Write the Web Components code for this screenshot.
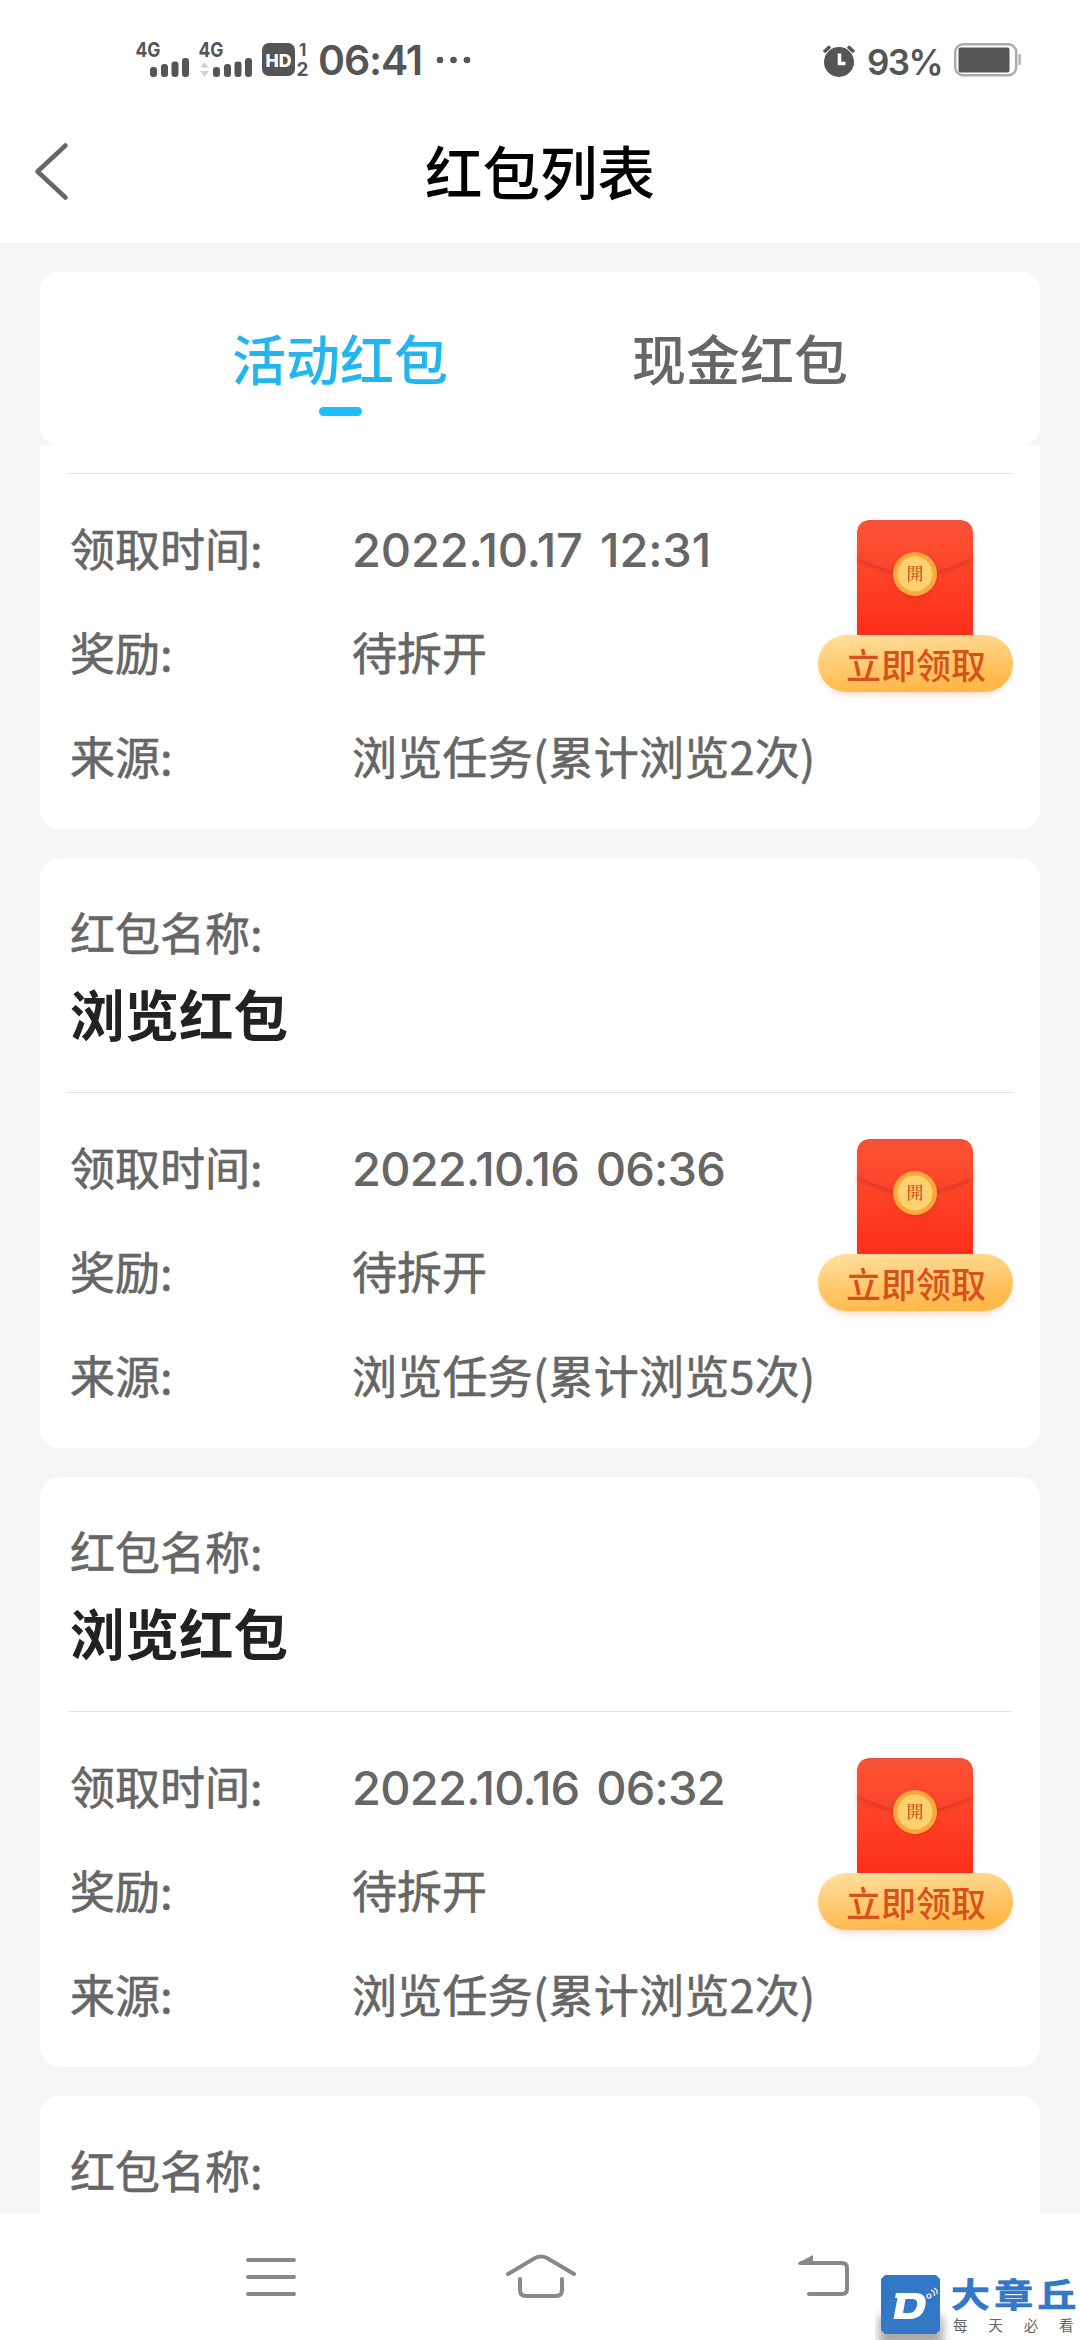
<!DOCTYPE html>
<html lang="zh-CN">
<head>
<meta charset="utf-8">
<title>红包列表</title>
<style>
  html, body { margin: 0; padding: 0; }
  body { width: 1080px; height: 2340px; overflow: hidden; background: #f6f6f6;
    font-family: "Noto Sans CJK SC", sans-serif; }
</style>
</head>
<body>
<packet-app></packet-app>
<script>
const define = (name, html, init) => {
  const tpl = document.createElement('template');
  tpl.innerHTML = html;
  customElements.define(name, class extends HTMLElement {
    connectedCallback() {
      if (this.shadowRoot) return;
      this.attachShadow({ mode: 'open' }).appendChild(tpl.content.cloneNode(true));
      if (init) init.call(this, this.shadowRoot);
    }
  });
};

/* Text spread to a set advance width through letter spacing. */
define('fit-text', `<style>
  :host { display: block; }
  span { display: inline-block; white-space: pre; }
</style><span></span>`, function (root) {
  const s = root.querySelector('span');
  s.textContent = this.getAttribute('text');
  const w = Number(this.getAttribute('width'));
  const natural = s.getBoundingClientRect().width;
  if (w && natural) s.style.letterSpacing = ((w - natural) / s.textContent.length) + 'px';
});

define('signal-bars', `
<style>:host{display:block;width:58px;height:38px} svg{display:block}</style>
<svg width="58" height="38" viewBox="0 0 58 38">
  <text x="-.5" y="18" font-family="Inter" font-weight="700" font-size="20" textLength="25" lengthAdjust="spacingAndGlyphs" fill="#555">4G</text>
  <g fill="#555"><rect x="14" y="28" width="7" height="10" rx="3"/><rect x="25" y="25" width="7" height="13" rx="3"/>
  <rect x="35.500" y="22.500" width="7" height="15.500" rx="3"/><rect x="46" y="19" width="7" height="19" rx="3"/></g>
  <g id="arrows" fill="#d2d2d2"><path d="M1 28.500 5.500 23.500 10 28.500Z"/><path d="M1 32 5.500 38 10 32Z"/></g>
</svg>`, function (root) {
  if (!this.hasAttribute('data-arrows')) root.getElementById('arrows').remove();
});

define('status-bar', `
<style>
  :host { display: flex; height: 120px; box-sizing: border-box; padding: 39px 59px 0 136px;
    background: #fff; color: #555; font-family: Inter, sans-serif; }
  .left, .right { display: flex; align-items: flex-start; }
  .right { margin-left: auto; }
  signal-bars { margin-right: 5px; }
  svg { display: block; overflow: visible; }
  .time { font-size: 41px; font-weight: 600; line-height: 42px; margin: 0 0 0 8px; }
  .pct { font-size: 35px; font-weight: 600; line-height: 46px; margin-left: 12px; }
</style>
<div class="left">
  <signal-bars></signal-bars>
  <signal-bars data-arrows></signal-bars>
  <svg width="48" height="40" viewBox="0 0 48 40" font-family="Inter" font-weight="700">
    <rect x="0" y="4" width="33" height="33" rx="7" fill="#555"/>
    <text x="3.500" y="27.500" font-size="17" font-weight="800" textLength="26" lengthAdjust="spacingAndGlyphs" fill="#fff">HD</text>
    <text x="37" y="16.500" font-size="17" fill="#555">1</text>
    <text x="34.500" y="37" font-size="19" fill="#555">2</text>
  </svg>
  <fit-text class="time" text="06:41" width="104"></fit-text>
  <svg width="50" height="40" viewBox="0 0 50 40" fill="#555"><circle cx="18" cy="21" r="3.300"/><circle cx="31.500" cy="21" r="3.300"/><circle cx="45" cy="21" r="3.300"/></svg>
</div>
<div class="right">
  <svg width="32" height="40" viewBox="0 0 32 40">
    <circle cx="16" cy="23" r="15" fill="#555"/>
    <path d="M1 13 7 7.500M31 13 25 7.500" stroke="#555" stroke-width="3.600"/>
    <path d="M16.500 14.500V24.500H22.500" fill="none" stroke="#fff" stroke-width="3.600"/>
  </svg>
  <fit-text class="pct" text="93%" width="75"></fit-text>
  <svg style="margin-left:12px" width="67" height="40" viewBox="0 0 67 40">
    <rect x="1.200" y="5.200" width="61" height="31" rx="8" fill="none" stroke="#aaa" stroke-width="2.400"/>
    <rect x="4.500" y="8.500" width="51" height="25" rx="2" fill="#555"/>
    <rect x="64.500" y="15" width="2.200" height="11" rx="1" fill="#aaa"/>
  </svg>
</div>`);

define('page-header', `
<style>
  :host { display: grid; grid-template-columns: 120px 1fr 120px; align-items: center; height: 123px;
    box-sizing: border-box; padding-bottom: 20px; background: #fff; }
  h1 { margin: 0 0 3px; text-align: center; font-size: 57.500px; font-weight: 500; line-height: 80px; color: #000; }
  svg { display: block; }
</style>
<svg width="80" height="60" viewBox="0 0 80 60"><path d="M65.500 4 37.500 30 65.500 56" transform="translate(0 -.5)" fill="none" stroke="#666" stroke-width="4.500" stroke-linecap="round" stroke-linejoin="round"/></svg>
<h1><slot></slot></h1>`);

define('tab-item', `
<style>
  :host { display: flex; flex: 1; flex-direction: column; align-items: center; padding-top: 47px;
    font-size: 54px; font-weight: 500; line-height: 78px; color: #666; }
  i { display: block; width: 43px; height: 9px; margin-top: 10px; border-radius: 5px; }
  :host([active]) { color: #25b5ed; }
  :host([active]) i { background: #1fbcfa; }
</style><span><slot></slot></span><i></i>`);

define('tab-bar', `
<style>
  :host { display: block; padding: 29px 40px 0; background: #f6f6f6; }
  div { display: flex; height: 173px; padding: 0 100px; border-radius: 17px; background: #fff; box-sizing: border-box; }
</style><div><slot></slot></div>`);

define('claim-badge', `
<style>
  :host { display: block; width: 220px; height: 200px; }
  svg { display: block; overflow: visible; }
</style>
<svg width="220" height="200" viewBox="0 0 220 200">
  <defs>
    <linearGradient id="body" x1="0" y1="0" x2="0" y2="1"><stop offset="0" stop-color="#f85036"/><stop offset=".18" stop-color="#ff4f30"/><stop offset=".6" stop-color="#ff3d23"/><stop offset="1" stop-color="#fb2d1c"/></linearGradient>
    <linearGradient id="flap" x1="0" y1="0" x2="0" y2="1"><stop offset="0" stop-color="#f0523c"/><stop offset=".25" stop-color="#ff5032"/><stop offset="1" stop-color="#f9432b"/></linearGradient>
    <linearGradient id="gold" x1="0" y1="0" x2="0.300" y2="1"><stop offset="0" stop-color="#ffe0a0"/><stop offset="1" stop-color="#ffb84a"/></linearGradient>
    <filter id="soft" x="-20%" y="-40%" width="140%" height="200%"><feGaussianBlur stdDeviation="4"/></filter>
    <filter id="edge" x="-20%" y="-20%" width="140%" height="140%"><feGaussianBlur stdDeviation="2"/></filter>
  </defs>
  <rect x="48" y="22" width="117" height="120" rx="14" fill="#ff6b50" opacity=".25" filter="url(#edge)"/>
  <path d="M48 138V35Q48 20 63 20H149Q164 20 164 35V138Z" fill="url(#body)"/>
  <path d="M49 59Q78 73 106 76Q134 73 163 59" fill="none" stroke="#b92f20" stroke-width="4" opacity=".55" filter="url(#edge)"/>
  <path d="M48 57V35Q48 20 63 20H149Q164 20 164 35V57Q134 72 106 74Q78 72 48 57Z" fill="url(#flap)"/>
  <circle cx="106" cy="76" r="22" fill="#c52b16" opacity=".4" filter="url(#edge)"/>
  <circle cx="106" cy="74" r="22" fill="#f7a93b"/>
  <circle cx="106" cy="74" r="17.500" fill="#ffd06e"/>
  <text x="106" y="80" text-anchor="middle" font-family="Noto Serif CJK TC, Noto Sans CJK TC, serif" font-size="17" font-weight="500" fill="#c4501c">開</text>
  <rect x="13" y="142" width="187" height="52" rx="26" fill="#ff7a3c" opacity=".35" filter="url(#soft)"/>
  <rect x="9" y="135" width="195" height="57" rx="28.500" fill="url(#gold)"/>
  <text x="107" y="178.500" text-anchor="middle" font-family="Noto Sans CJK SC" font-size="35" font-weight="500" fill="#d5521c">立即领取</text>
</svg>`);

define('info-row', `
<style>
  :host { display: grid; grid-template-columns: 282px 1fr; height: 104px; align-items: center;
    font-size: 45px; line-height: 60px; color: #666; white-space: nowrap; -webkit-text-stroke: .6px #666; }
  .date { font-family: Inter, sans-serif; font-size: 47px; font-weight: 450; word-spacing: 5px; padding-top: 4px; -webkit-text-stroke: 0; }
</style><span><slot name="label"></slot></span><span><slot></slot></span>`, function (root) {
  const w = this.getAttribute('data-width');
  if (w) {
    const t = document.createElement('fit-text');
    t.className = 'date';
    t.setAttribute('text', this.getAttribute('data-date'));
    t.setAttribute('width', w);
    root.querySelectorAll('span')[1].replaceWith(t);
  }
});

define('packet-card', `
<style>
  :host { display: block; height: 590px; box-sizing: border-box; padding: 44px 28px 0; border-radius: 20px; background: #fff; }
  .name { padding-left: 2px; height: 190px; box-sizing: border-box; }
  .name small { display: block; font-size: 45px; line-height: 60px; color: #666; -webkit-text-stroke: .6px #666; }
  .name h2 { margin: 16px 0 0; font-size: 54.500px; line-height: 70px; font-weight: 700; color: #222; }
  .detail { display: flex; border-top: 1px solid #e2e2e2; padding: 22px 0 0 2px; }
  .rows { flex: 1; }
  claim-badge { flex: none; margin: 4px -17px 0 -200px; align-self: flex-start; }
</style>
<div class="name"><small>红包名称:</small><h2>浏览红包</h2></div>
<div class="detail">
  <div class="rows">
    <info-row id="date"><span slot="label">领取时间:</span></info-row>
    <info-row><span slot="label">奖励:</span>待拆开</info-row>
    <info-row><span slot="label">来源:</span><span id="src" style="letter-spacing:.25px"></span></info-row>
  </div>
  <claim-badge></claim-badge>
</div>`, function (root) {
  root.getElementById('src').textContent = '浏览任务(累计浏览' + this.getAttribute('count') + '次)';
  /* Parts scrolled out of view keep their space but render nothing. */
  const off = this.getAttribute('offscreen');
  if (off === 'name') root.querySelector('.name').textContent = '';
  if (off === 'detail') { root.querySelector('h2').remove(); root.querySelector('.detail').remove(); }
});

customElements.define('packet-list', class extends HTMLElement {
  connectedCallback() {
    const root = this.attachShadow({ mode: 'open' });
    root.innerHTML = `<style>
      :host { display: block; flex: 1; min-height: 0; overflow: hidden; padding: 0 40px; background: #f6f6f6; }
      .track { display: flex; flex-direction: column; gap: 29px; margin-top: -206px; }
      packet-card { flex: none; }
    </style><div class="track"></div>`;
    const items = [['2022.10.17 12:31', 359, 2, 'name'], ['2022.10.16 06:36', 373, 5, ''], ['2022.10.16 06:32', 373, 2, ''], ['', 0, 0, 'detail']];
    for (const [date, width, count, offscreen] of items) {
      const card = document.createElement('packet-card');
      card.setAttribute('count', count);
      card.setAttribute('offscreen', offscreen);
      root.querySelector('.track').appendChild(card);
      const old = card.shadowRoot.getElementById('date');
      if (!old) continue;
      const row = document.createElement('info-row');
      row.setAttribute('data-date', date);
      row.setAttribute('data-width', width);
      row.innerHTML = '<span slot="label">领取时间:</span>';
      old.replaceWith(row);
    }
  }
});

define('brand-mark', `
<style>:host{display:block;position:absolute;right:0;bottom:0;width:205px;height:70px} svg{display:block}</style>
<svg width="205" height="70" viewBox="0 0 205 70">
  <defs><filter id="s" x="-30%" y="-30%" width="160%" height="160%"><feGaussianBlur stdDeviation="5"/></filter></defs>
  <rect x="4" y="46" width="64" height="30" fill="#555" opacity=".5" filter="url(#s)"/>
  <path d="M10 5H61L65 9V60L61 64H10L6 60V9Z" fill="#3377c7"/>
  <path fill="#fff" fill-rule="evenodd" d="M21 23H40C48 23 52 27 50.500 35C49 44 43 49 35 49H18.500L22.500 28H20ZM30.500 29 28 43H34C38.500 43 41 40 42 35.500C43 31 41 29 37 29Z"/>
  <g fill="none" stroke="#fff" stroke-width="1.200"><circle cx="54" cy="26" r="2"/><path d="M56 20Q60 21 59.500 26M59 18Q63 20 62 24"/></g>
  <g transform="translate(76 0) scale(1.16 1)"><text x="0" y="36.500" font-family="Noto Sans CJK SC" font-weight="700" font-size="33.500" textLength="108" fill="#3377c7" stroke="#3377c7" stroke-width=".7">大章丘</text></g>
  <text x="78" y="60.500" font-family="Noto Sans CJK SC" font-size="14.500" textLength="120.500" fill="#666">每天必看</text>
</svg>`);

define('nav-bar', `
<style>
  :host { display: flex; position: relative; height: 126px; background: #fff; justify-content: center; }
  svg { display: block; margin-top: 34px; }
  .keys { gap: 191px; display: flex; }
</style>
<div class="keys">
<svg width="80" height="60" viewBox="0 0 80 60" stroke="#888" stroke-width="4" stroke-linecap="round"><path d="M19 12H65M19 29H65M19 46H65"/></svg>
<svg width="80" height="60" viewBox="0 0 80 60" fill="none" stroke="#888" stroke-width="4" stroke-linecap="round"><path d="M8 26 35 10Q41 7 47 10L74 26M20 31V42Q20 48 26 48H56Q62 48 62 42V31"/></svg>
<svg width="80" height="60" viewBox="0 0 80 60" fill="none" stroke="#888" stroke-width="4" stroke-linecap="round"><path d="M30 15H71Q76 15 76 20V41Q76 46 71 46H38"/><path d="M27 15 42 7V17H29Q27 17 27 15Z" fill="#888" stroke="none"/></svg>
</div>
<brand-mark></brand-mark>`);

define('packet-app', `
<style>:host{display:flex;flex-direction:column;width:1080px;height:2340px;overflow:hidden;background:#f6f6f6}
 status-bar,page-header,tab-bar,nav-bar{flex:none}</style>
<status-bar></status-bar>
<page-header>红包列表</page-header>
<tab-bar><tab-item active>活动红包</tab-item><tab-item>现金红包</tab-item></tab-bar>
<packet-list></packet-list>
<nav-bar></nav-bar>`);
</script>
</body>
</html>
